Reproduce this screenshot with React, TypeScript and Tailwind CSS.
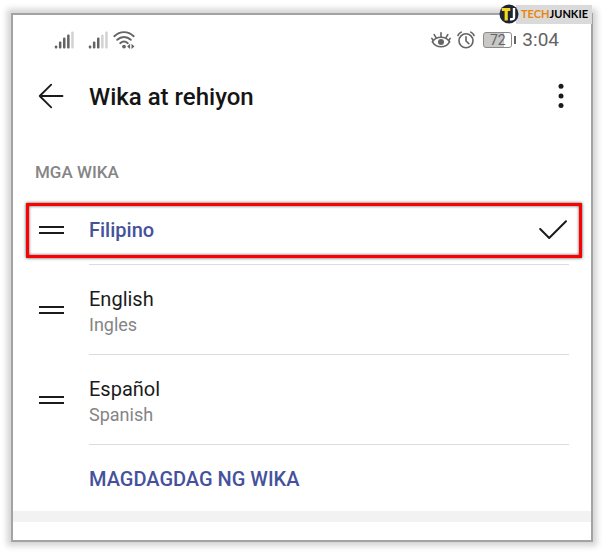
import type { ReactNode } from "react";

const SignalIcon = ({ bars }: { bars: number }) => (
  <svg viewBox="0 0 20 18" className="w-5 h-[18px]" aria-hidden="true">
    {[3, 7, 11, 14, 17].map((height, i) => (
      <rect
        key={height}
        x={0.8 + i * 4.1}
        y={17.6 - height}
        width="2.5"
        height={height}
        rx="1"
        fill={i < bars ? "#646464" : "#d2d2d2"}
      />
    ))}
  </svg>
);

const WifiIcon = () => (
  <svg viewBox="0 0 22 18" className="w-[22px] h-[18px]" aria-hidden="true">
    <g fill="none" stroke="#646464" strokeWidth="1.9" strokeLinecap="round">
      <path d="M1.3 5.2C7 -0.2 15 -0.2 20.7 5.2" />
      <path d="M4.2 8.8C8.2 5 13.8 5 17.8 8.8" />
      <path d="M7.2 12.2C9.6 10 12.4 10 14.8 12.2" />
    </g>
    <circle cx="11" cy="15.6" r="1.9" fill="#646464" />
    <path d="M14.1 15.4l3-2.7v5.2zM21.5 15.4l-3-2.7v5.2z" fill="#646464" />
  </svg>
);

const EyeIcon = () => (
  <svg viewBox="0 0 20 18" className="w-5 h-[18px]" aria-hidden="true">
    <g fill="none" stroke="#646464" strokeWidth="1.6" strokeLinecap="round">
      <path d="M1.4 10.8C5.4 4.8 14.6 4.8 18.6 10.8C14.6 17.4 5.4 17.4 1.4 10.8Z" />
      <path d="M10 5.6V1.8M5 6.6L3.2 3.6M15 6.6L16.8 3.6M2.4 9.4L0.9 7.4M17.6 9.4L19.1 7.4" />
    </g>
    <circle cx="10" cy="10.9" r="3" fill="#646464" />
  </svg>
);

const AlarmIcon = () => (
  <svg viewBox="0 0 18 18" className="w-[18px] h-[18px]" aria-hidden="true">
    <g fill="none" stroke="#646464" strokeWidth="1.6" strokeLinecap="round">
      <circle cx="9" cy="9.8" r="7" />
      <path d="M9 5.8V10L11.8 12.6M1 4.4C1.6 2.9 2.7 1.8 4.2 1.1M17 4.4C16.4 2.9 15.3 1.8 13.8 1.1" />
    </g>
  </svg>
);

const ArrowIcon = () => (
  <svg viewBox="0 0 26 26" className="w-[26px] h-[26px]" aria-hidden="true">
    <path
      d="M24.5 13H1.7M13.2 1.6L1.7 13L13.2 24.4"
      fill="none"
      stroke="#1b1b1b"
      strokeWidth="1.8"
      strokeLinecap="round"
      strokeLinejoin="round"
    />
  </svg>
);

const DotsIcon = () => (
  <svg viewBox="0 0 6 26" className="w-[6px] h-[26px]" aria-hidden="true">
    <g fill="#1b1b1b">
      <circle cx="3" cy="3.2" r="2.5" />
      <circle cx="3" cy="12.9" r="2.5" />
      <circle cx="3" cy="22.6" r="2.5" />
    </g>
  </svg>
);

const CheckIcon = () => (
  <svg viewBox="0 0 28 20" className="w-7 h-5" aria-hidden="true">
    <path
      d="M1.2 9L10.2 18L27 1.2"
      fill="none"
      stroke="#1b1b1b"
      strokeWidth="2"
      strokeLinecap="round"
      strokeLinejoin="round"
    />
  </svg>
);

const DragHandle = ({ label }: { label: string }) => (
  <button
    type="button"
    aria-label={label}
    className="flex flex-col gap-1 w-[25px] shrink-0"
  >
    <span className="block h-[2px] w-full bg-[#1b1b1b]" />
    <span className="block h-[2px] w-full bg-[#1b1b1b]" />
  </button>
);

const StatusBar = () => (
  <div className="flex items-center justify-between pl-[41px] pr-8 pt-3 h-[38px] text-[#646464]">
    <div className="flex items-center">
      <SignalIcon bars={4} />
      <span className="w-[14px]" />
      <SignalIcon bars={3} />
      <span className="w-[5px]" />
      <WifiIcon />
    </div>
    <div className="flex items-center">
      <EyeIcon />
      <span className="w-[6px]" />
      <AlarmIcon />
      <span className="w-2" />
      <span className="flex items-center gap-[2px]">
        <span className="flex items-center justify-center w-[29px] h-4 rounded-[3px] border border-[#8a8a8a] bg-linear-to-r from-[#c8c8c8] from-75% to-white to-75% text-sm leading-none">
          72
        </span>
        <span className="w-[2px] h-2 bg-[#646464]" />
      </span>
      <span className="ml-[6px] text-[19px] leading-6">3:04</span>
    </div>
  </div>
);

const Header = () => (
  <header className="flex items-center h-[86px] pl-[25px] pr-[27px]">
    <button type="button" aria-label="Back">
      <ArrowIcon />
    </button>
    <h1 className="flex-grow ml-[25px] pt-[2px] text-2xl font-medium text-[#151515]">
      Wika at rehiyon
    </h1>
    <button type="button" aria-label="More options">
      <DotsIcon />
    </button>
  </header>
);

const LanguageRow = ({ name, detail }: { name: string; detail: string }) => (
  <li className="flex items-center h-[90px] pl-[26px]">
    <DragHandle label={`Move ${name}`} />
    <div className="flex flex-col justify-center flex-grow h-full pt-[2px] ml-[25px] mr-[22px] border-b border-[#dcdcdc]">
      <p className="text-xl leading-7 text-[#1b1b1b]">{name}</p>
      <p className="text-lg leading-6 text-[#858585]">{detail}</p>
    </div>
  </li>
);

const Divider = ({ children }: { children?: ReactNode }) => (
  <div className="ml-[76px] mr-[22px] border-b border-[#dcdcdc] h-[7px]">
    {children}
  </div>
);

const Watermark = () => (
  <div className="absolute right-3 top-1 flex items-center">
    <svg
      viewBox="0 0 20 20"
      className="relative w-5 h-5 -mr-[3px]"
      aria-hidden="true"
    >
      <circle cx="10" cy="10" r="9.5" fill="#1d2434" />
      <path d="M2.8 4H11.3V7H8.8V16.5H5.6V7H2.8Z" fill="#f7d81c" />
      <path
        d="M15 4V13.2C15 15 13.8 15.6 11 15.2"
        fill="none"
        stroke="#ffffff"
        strokeWidth="2.4"
      />
    </svg>
    <p className="h-[19px] pl-[5px] pr-1 bg-[#dadada] font-[Lato,sans-serif] text-[11px] leading-[17px] font-bold text-black">
      <span className="text-[#e8860c]">TECH</span>JUNKIE
    </p>
  </div>
);

export default function App() {
  return (
    <div className="relative bg-white px-[11px] pt-[13px] pb-[11px] font-[Roboto,sans-serif]">
      <main className="border-2 border-[#a3a3a3] bg-white shadow-[0_0_6px_4px_#d4d4d4]">
        <StatusBar />
        <Header />
        <section aria-labelledby="languages">
          <h2
            id="languages"
            className="pt-[21px] pl-[22px] text-[17px] leading-6 font-medium text-[#858585]"
          >
            MGA WIKA
          </h2>
          <ul>
            <li className="pt-[19px]">
              <div className="flex items-center h-[55px] ml-[13px] mr-[9px] pl-[10px] pr-3 pb-[2px] border-3 border-[#fe0000] shadow-[0_0_3px_#3c5555,inset_0_0_3px_#3c5555]">
                <DragHandle label="Move Filipino" />
                <p className="flex-grow ml-[25px] text-xl font-medium text-[#45529b]">
                  Filipino
                </p>
                <CheckIcon />
              </div>
              <Divider />
            </li>
            <LanguageRow name="English" detail="Ingles" />
            <LanguageRow name="Español" detail="Spanish" />
          </ul>
          <button
            type="button"
            className="block h-[66px] pl-[76px] pt-[2px] text-xl font-medium text-[#45529b]"
          >
            MAGDAGDAG NG WIKA
          </button>
        </section>
        <div className="h-[11px] mb-[18px] bg-[#f2f2f2]" />
      </main>
      <Watermark />
    </div>
  );
}
